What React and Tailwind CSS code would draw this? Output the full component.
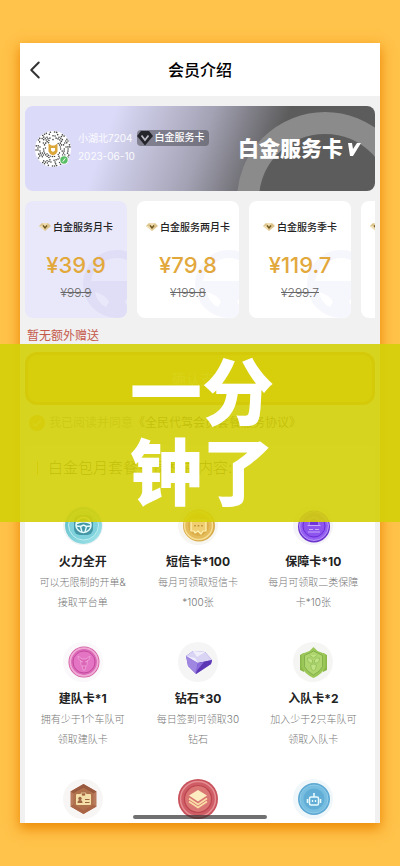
import { MdCheck } from "react-icons/md";
import { ChevronLeft } from "lucide-react";

const plans = [
  { name: "白金服务月卡", price: "¥39.9", oldPrice: "¥99.9", active: true },
  { name: "白金服务两月卡", price: "¥79.8", oldPrice: "¥199.8" },
  { name: "白金服务季卡", price: "¥119.7", oldPrice: "¥299.7" },
  { name: "白金服务半年卡", price: "¥239.4", oldPrice: "¥599.4" },
];

const WheelIcon = () => (
  <svg viewBox="0 0 40 40" className="size-10">
    <defs>
      <linearGradient id="wheel" x1="0" y1="0" x2="1" y2="1">
        <stop offset="0" stopColor="#57b9c6" />
        <stop offset="1" stopColor="#a5e6ec" />
      </linearGradient>
    </defs>
    <circle cx="20" cy="20" r="20" fill="#eef3f4" />
    <circle cx="20.500" cy="20.500" r="18.500" fill="url(#wheel)" />
    <circle cx="20.500" cy="20" r="15" fill="#7fd2dc" stroke="#bdeef2" />
    <rect x="11" y="10" width="19" height="20" rx="6" fill="#4497a6" />
    <circle cx="20.500" cy="20" r="7.5" fill="none" stroke="#e6fbfc" strokeWidth="1.6" />
    <path d="M13.500 18.500q7-3.500 14 0M13.500 21l4 .5 1.500 5.500M27.500 21l-4 .5-1.500 5.500M17.500 21.500l3-1.500 3 1.500" fill="none" stroke="#e6fbfc" strokeWidth="1.400" />
  </svg>
);

const SmsIcon = () => (
  <svg viewBox="0 0 40 40" className="size-10">
    <circle cx="20" cy="20" r="20" fill="#f6f5f0" />
    <circle cx="21" cy="20.500" r="16" fill="#d8ab49" />
    <circle cx="20.500" cy="20.500" r="14" fill="#e5bc5c" stroke="#f7de93" strokeWidth="1.500" />
    <circle cx="20.500" cy="20.500" r="10.500" fill="#dcae49" />
    <path d="M13 15h15v11h-3l-2 3-3-3-3 2-1-2h-3z" fill="#f0cf72" stroke="#fff3b8" strokeWidth="1.200" strokeLinejoin="round" />
    <path d="M17 20v1.500M20.500 20v1.500M24 20v1.500" stroke="#b98a31" strokeWidth="1.500" />
  </svg>
);

const GuardIcon = () => (
  <svg viewBox="0 0 40 40" className="size-10">
    <defs>
      <radialGradient id="guard">
        <stop offset="0.500" stopColor="#7d3cec" />
        <stop offset="1" stopColor="#9d6cf3" />
      </radialGradient>
    </defs>
    <circle cx="20" cy="20" r="20" fill="#f4f3f7" />
    <circle cx="21" cy="21.500" r="16" fill="#6d35cc" />
    <circle cx="21" cy="21" r="14.500" fill="url(#guard)" stroke="#b592fa" />
    <circle cx="21" cy="21" r="11" fill="#8d55ee" stroke="#6b2fd8" />
    <path d="M16 20.500q0-7 5-8 5 1 5 8z" fill="#7034dc" stroke="#b795f9" />
    <path d="M15 27h12M16 24.500h4M22 24.500h4M14.500 20.500h13" stroke="#c7aafb" />
  </svg>
);

const TeamIcon = () => (
  <svg viewBox="0 0 40 40" className="size-10">
    <circle cx="20" cy="20" r="20" fill="#faf8fa" />
    <circle cx="21" cy="20" r="15.500" fill="#d1569f" />
    <circle cx="21" cy="20" r="13.800" fill="#dc68b8" stroke="#efabd5" strokeWidth="1.800" />
    <circle cx="21" cy="20" r="11" fill="#e375c4" stroke="#c34a9e" />
    <path d="M15 14q0 4 3 5-1 4 1 5l1 4h2l1-4q2-1 1-5 3-1 3-5l-4 3h-4zM17 19l3 1M25 19l-3 1M19 24h4" fill="#db67b6" stroke="#f1a6dc" strokeWidth="0.800" />
  </svg>
);

const GemIcon = () => (
  <svg viewBox="0 0 40 40" className="size-10">
    <circle cx="20" cy="20" r="20" fill="#f5f5f6" />
    <path d="M8 14l7-5 12 1 7 8-1 4-15 10-8-8z" fill="#7b58cf" />
    <path d="M8 14l7-5 12 1 7 8-14 3z" fill="#d9d3f4" />
    <path d="M15 9l4 6 8-5zM8 14l9 2 3 5z" fill="#f1effc" />
    <path d="M8 14l12 7-2 11-8-8z" fill="#9e86e1" />
    <path d="M20 21l14-3-1 4-15 10z" fill="#5c36b5" />
    <path d="M20 21l6-1-9 11z" fill="#8b6bdb" />
  </svg>
);

const ShieldIcon = () => (
  <svg viewBox="0 0 40 40" className="size-10">
    <circle cx="20" cy="20" r="20" fill="#f5f6f4" />
    <path d="M7 13l4-2v19l-4-2zM34 13l-4-2v19l4-2z" fill="#8bb64a" />
    <path d="M20.500 5l4 4 8 3v13q-3 7-12 11-9-4-12-11V12l8-3z" fill="#9ac757" />
    <path d="M20.500 9l9 4.500v11q-2 5-9 8.500-7-3.500-9-8.500v-11z" fill="#aed56e" stroke="#85b04c" />
    <path d="M14.500 16q3-1 5 2v3q-5 1-5-5zM26.500 16q-3-1-5 2v3q5 1 5-5zM17.500 23q3-2 6 0l-1 4-2 2-2-2zM16.500 13l4 3 4-3" fill="#bfe283" stroke="#8dba56" strokeWidth="0.700" />
  </svg>
);

const IdCardIcon = () => (
  <svg viewBox="0 0 40 40" className="size-10">
    <circle cx="20" cy="20" r="20" fill="#f7f6f5" />
    <path d="M20.500 5l13 7.500v15L20.500 35l-13-7.500v-15z" fill="#b97b5c" />
    <path d="M20.500 5l13 7.500-3 2L20.500 9l-10 5.500-3-2z" fill="#9a5a3e" />
    <path d="M7.500 27.500l13 7.500 13-7.500-3-2-10 5.500-10-5.500z" fill="#a96546" />
    <path d="M20.500 9l10 5.500v11L20.500 31l-10-5.500v-11z" fill="#b0714d" />
    <rect x="13" y="15" width="15" height="11" rx="1" fill="#f4dfa8" />
    <path d="M18 14h5l-1 3h-3z" fill="#a35f3d" stroke="#f4dfa8" strokeWidth="0.700" />
    <circle cx="17" cy="19.500" r="1.700" fill="#9c6443" />
    <path d="M14.500 24q0-3 2.500-3t2.500 3zM22 20h4.500v1H22zM22 23h4.500v1H22z" fill="#9c6443" />
  </svg>
);

const LayersIcon = () => (
  <svg viewBox="0 0 40 40" className="size-10">
    <circle cx="20" cy="20" r="20" fill="#c8525b" />
    <circle cx="20" cy="20" r="17.500" fill="#cf5d65" stroke="#e58f94" strokeWidth="1.500" />
    <circle cx="20" cy="20" r="13.500" fill="#da7674" stroke="#bd4550" strokeWidth="1.200" />
    <path d="M20 11l9 5.500-9 6-9-6z" fill="#fdecc0" />
    <path d="M11 19.500l9 6 9-6M11 22.500l9 6 9-6" fill="none" stroke="#fbdfa6" strokeWidth="1.600" />
  </svg>
);

const RobotIcon = () => (
  <svg viewBox="0 0 40 40" className="size-10">
    <circle cx="20" cy="20" r="20" fill="#f0f7fa" />
    <circle cx="21" cy="20" r="16" fill="#5ea9d3" />
    <circle cx="21" cy="20" r="14" fill="#76bde0" stroke="#8fcbe8" />
    <circle cx="21" cy="20" r="10.500" fill="#61add5" />
    <rect x="16.500" y="18" width="9" height="8" rx="1.500" fill="none" stroke="#e9faff" strokeWidth="1.500" />
    <path d="M21 18v-4M14.500 20v4M27.500 20v4" stroke="#e9faff" strokeWidth="1.600" />
    <path d="M19.500 21v2M22.500 21v2" stroke="#e9faff" strokeWidth="1.300" />
  </svg>
);

const benefits = [
  { Icon: WheelIcon, title: "火力全开", lines: ["可以无限制的开单&", "接取平台单"] },
  { Icon: SmsIcon, title: "短信卡*100", lines: ["每月可领取短信卡", "*100张"] },
  { Icon: GuardIcon, title: "保障卡*10", lines: ["每月可领取二类保障", "卡*10张"] },
  { Icon: TeamIcon, title: "建队卡*1", lines: ["拥有少于1个车队可", "领取建队卡"] },
  { Icon: GemIcon, title: "钻石*30", lines: ["每日签到可领取30", "钻石"] },
  { Icon: ShieldIcon, title: "入队卡*2", lines: ["加入少于2只车队可", "领取入队卡"] },
  { Icon: IdCardIcon },
  { Icon: LayersIcon },
  { Icon: RobotIcon },
];

// dots of the round mini-program code, kept clear of the logo in the middle
const codeDots = [];
for (let ring = 0; ring < 6; ring++) {
  const radius = 7.5 + ring * 1.9;
  const count = Math.round(radius * 3);
  for (let i = 0; i < count; i++) {
    if ((i * 7 + ring * 5 + ((i * i) % 11)) % 9 > 4) continue;
    const angle = (i / count) * Math.PI * 2;
    codeDots.push({ x: 18 + radius * Math.cos(angle), y: 18 + radius * Math.sin(angle) });
  }
}

const Avatar = () => (
  <svg viewBox="0 0 36 36" className="size-9 shrink-0">
    <circle cx="18" cy="18" r="18" fill="#fff" />
    {codeDots.map((dot, i) => (
      <circle key={i} cx={dot.x} cy={dot.y} r="0.8" fill="#444" />
    ))}
    <circle cx="18" cy="18" r="7" fill="#fff" />
    <path d="M13.500 12.500l3 2h3l3-2v8q-1 3-4.500 4-3.500-1-4.500-4z" fill="#dba63a" />
    <path d="M16 17h4v2.500l-2 1.500-2-1.500z" fill="#fff" />
    <circle cx="29" cy="29" r="4.500" fill="#fff" />
    <circle cx="29" cy="29" r="3.700" fill="#58bd64" />
    <path d="M27.500 30.500q1 0 1.500-1.500t1.500-1.500" fill="none" stroke="#fff" />
  </svg>
);

const DiamondBadge = () => (
  <svg viewBox="0 0 16 16" className="size-4 shrink-0">
    <path d="M4 1h8l4 5-8 9.500L0 6z" fill="#24242b" />
    <path d="M4.500 5.500L8 10l3.500-4.500" fill="none" stroke="#b9b9c4" strokeWidth="1.800" />
  </svg>
);

const GoldDiamond = () => (
  <svg viewBox="0 0 12 10" className="h-[10px] w-3 shrink-0">
    <path d="M3 1h6l3 3-6 5-6-5z" fill="#dcc48c" />
    <path d="M3 1l3 3 3-3zM0 4h4l2 5z" fill="#f0dfb4" />
    <path d="M4 3.500l2 2.500 2-2.500" fill="none" stroke="#6d5420" strokeWidth="1.300" />
  </svg>
);

const WheelMark = ({ className }) => (
  <svg viewBox="0 0 68 68" className={className}>
    <circle cx="34" cy="34" r="30" fill="none" stroke="currentColor" strokeWidth="8" />
    <path
      fillRule="evenodd"
      d="M5 31h58v6q-2 20-21 26H26Q7 57 5 37zM12 42q2 11 11 15l3-5q-3-7-14-10zM56 42q-2 11-11 15l-3-5q3-7 14-10z"
      fill="currentColor"
    />
  </svg>
);

const PlanCard = ({ plan }) => (
  <button
    className={
      plan.active
        ? "relative flex h-[117px] w-[102px] shrink-0 flex-col items-center overflow-hidden rounded-lg bg-[#e9e8fa] pt-4"
        : "relative flex h-[117px] w-[102px] shrink-0 flex-col items-center overflow-hidden rounded-lg bg-white pt-4"
    }
  >
    <WheelMark
      className={
        plan.active
          ? "absolute -right-6 bottom-0 size-[68px] text-[#dfdef6]"
          : "absolute -right-6 bottom-0 size-[68px] text-[#f6f6fd]"
      }
    />
    <span className="relative flex items-center gap-0.5 text-[10px] leading-5 font-medium whitespace-nowrap text-[#222]">
      <GoldDiamond />
      {plan.name}
    </span>
    <span className="relative mt-3 text-[22px] leading-8 font-medium text-[#e2a83c]">{plan.price}</span>
    <del className="relative mt-1 text-xs leading-4 font-light text-[#666]">{plan.oldPrice}</del>
  </button>
);

const MemberCard = () => (
  <section className="relative flex h-[85px] items-center overflow-hidden rounded-lg bg-[linear-gradient(110deg,#dbdaf8_24%,#a3a2b4_50%,#5c5c5c_70%)] pr-3.5 pl-2.5">
    <svg viewBox="0 0 140 85" className="absolute right-0 bottom-0 h-[85px] w-[140px]">
      <circle cx="90" cy="94" r="77" fill="none" stroke="#8b8b8b" strokeWidth="22" />
    </svg>
    <Avatar />
    <div className="relative ml-[7px] flex-1 pb-1 text-[10px] text-white/90">
      <div className="flex items-center gap-1">
        <span className="leading-[18px] whitespace-nowrap">小湖北7204</span>
        <span className="flex h-4 items-center gap-0.5 rounded bg-[#55555f]/60 pr-1 font-medium whitespace-nowrap text-white">
          <DiamondBadge />
          白金服务卡
        </span>
      </div>
      <p className="leading-[18px]">2023-06-10</p>
    </div>
    <h2 className="relative flex items-center gap-1 text-[21px] font-black whitespace-nowrap text-white">
      白金服务卡
      <svg viewBox="0 0 14 14" className="size-3.5">
        <path d="M1 1h4l1 6 4-6h4L6 14H3z" fill="#fff" />
      </svg>
    </h2>
  </section>
);

const Benefit = ({ benefit }) => {
  const { Icon, title, lines } = benefit;
  return (
    <li className="flex flex-col items-center text-center">
      <Icon />
      {title && (
        <>
          <h3 className="mt-[7px] text-xs leading-5 font-bold text-[#222]">{title}</h3>
          {lines.map(line => (
            <p key={line} className="text-[10px] leading-5 font-light whitespace-nowrap text-[#777]">
              {line}
            </p>
          ))}
        </>
      )}
    </li>
  );
};

const App = () => {
  return (
    <div className="relative min-h-screen bg-[#ffc24a] px-5 py-[43px] font-['Inter','Noto_Sans_CJK_SC',sans-serif]">
      <div className="relative overflow-hidden bg-[#f1f1f2] shadow-[0_5px_12px_1px_#ed8b08]">
        <header className="relative flex h-[53px] items-center justify-center bg-white">
          <button aria-label="返回" className="absolute left-0 text-[#333]">
            <ChevronLeft size={30} strokeWidth={1.6} />
          </button>
          <h1 className="text-base font-medium text-black">会员介绍</h1>
        </header>

        <main className="px-[5px] pt-2.5">
          <MemberCard />

          <div className="mt-2.5 flex gap-2.5 overflow-hidden">
            {plans.map(plan => (
              <PlanCard key={plan.name} plan={plan} />
            ))}
          </div>

          <p className="mt-2 pl-0.5 text-xs leading-5 text-[#c55a4b]">暂无额外赠送</p>

          <button className="mt-1.5 h-[53px] w-full rounded-xl border-[3px] border-[#d08a20] bg-[#f3bd38] text-sm text-[#ffe9a8]">
            确认支付
          </button>

          <label className="mt-2 flex items-center gap-1 pl-1 text-xs leading-5 text-[#888]">
            <input type="checkbox" defaultChecked className="peer sr-only" />
            <span className="flex size-4 items-center justify-center rounded-full bg-[#e6a83a] text-[#fff3cf]">
              <MdCheck className="size-3" />
            </span>
            <span className="whitespace-nowrap">
              我已阅读并同意
              <a href="#agreement" className="text-[#333]">
                《全民代驾会员套餐服务协议》
              </a>
            </span>
          </label>

          <section className="mt-3 bg-white pt-3 pb-1">
            <h2 className="flex items-center gap-2.5 pl-3 text-[15px] leading-[22px] font-light text-[#111]">
              <span className="h-3.5 w-px bg-[#e0a030]" />
              白金包月套餐会员权益内容:
            </h2>
            <ul className="mt-[26px] grid grid-cols-3 gap-y-[30px] pr-1">
              {benefits.map((benefit, i) => (
                <Benefit key={i} benefit={benefit} />
              ))}
            </ul>
          </section>
        </main>

        <div className="absolute bottom-1 left-1/2 h-1 w-[134px] -translate-x-1/2 rounded-full bg-[#333]/70" />
      </div>

      <div className="absolute inset-x-0 top-[344px] flex h-[178px] items-center justify-center bg-[#d4d008]/90 pl-1">
        <p className="text-center text-[72px] leading-[80px] font-black text-white">
          一分
          <br />
          钟了
        </p>
      </div>
    </div>
  );
};

export default App;
